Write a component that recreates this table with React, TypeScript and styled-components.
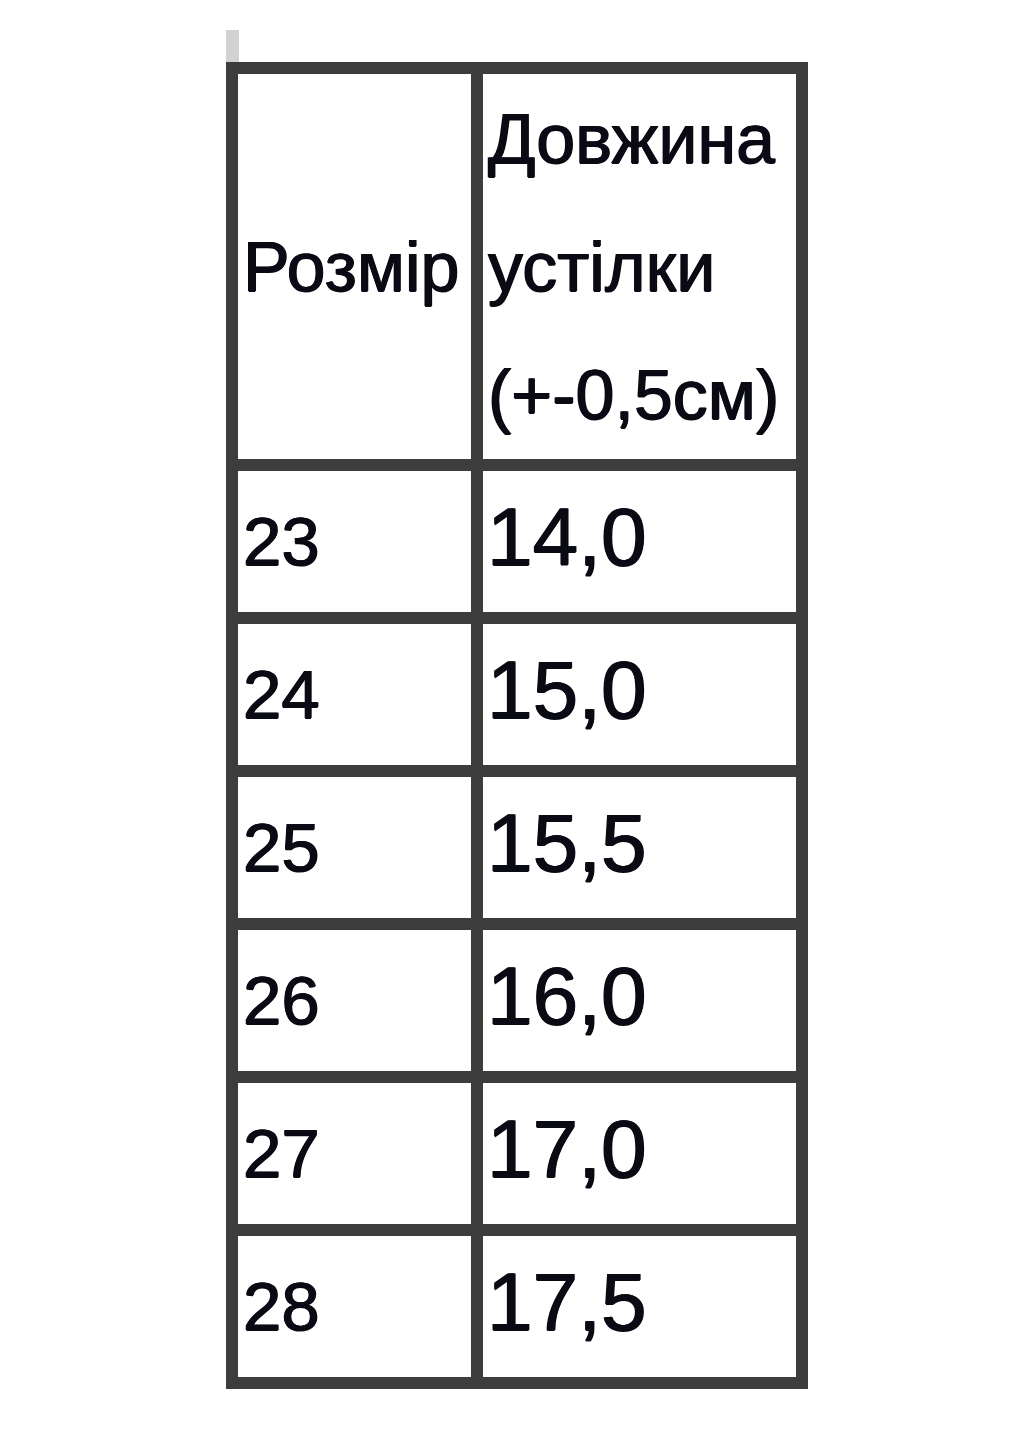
import React from 'react';
import styled, {createGlobalStyle} from 'styled-components';

const GlobalStyle = createGlobalStyle`
  html, body {
    margin: 0;
    padding: 0;
    background: #ffffff;
  }
  body {
    font-family: 'Liberation Sans', Arial, sans-serif;
    color: #0a0a14;
  }
`;

const Page = styled.div`
  display: flex;
  flex-direction: column;
  align-items: flex-start;
  padding-left: 226px;
  padding-top: 30px;
`;

const Notch = styled.div`
  width: 13px;
  height: 32px;
  background: #d2d2d2;
`;

const Table = styled.table`
  border-collapse: collapse;
  border: 12px solid #3d3d3d;
  table-layout: fixed;
`;

const heavy = `
  text-shadow: 0.7px 0 0 currentColor, -0.7px 0 0 currentColor, 0 0.5px 0 currentColor;
`;

const HeadCell = styled.td`
  height: 385px;
  padding: 0 0 0 5px;
  border: 12px solid #3d3d3d;
  font-size: 70px;
  line-height: 128px;
  vertical-align: middle;
  text-align: left;
  white-space: nowrap;
  ${heavy}
`;

const Cell = styled.td<{big?: boolean}>`
  height: ${({big}) => (big ? 131 : 141)}px;
  padding: 0 0 ${({big}) => (big ? 10 : 0)}px ${({big}) => (big ? 4 : 5)}px;
  border: 12px solid #3d3d3d;
  font-size: ${({big}) => (big ? 82 : 69)}px;
  line-height: ${({big}) => (big ? 131 : 141)}px;
  vertical-align: top;
  text-align: left;
  ${heavy}
`;

const rows: [string, string][] = [
  ['23', '14,0'],
  ['24', '15,0'],
  ['25', '15,5'],
  ['26', '16,0'],
  ['27', '17,0'],
  ['28', '17,5'],
];

export default function App() {
  return (
    <>
      <GlobalStyle />
      <Page>
        <Notch />
        <Table>
          <colgroup>
            <col style={{width: 245}} />
            <col style={{width: 325}} />
          </colgroup>
          <tbody>
            <tr>
              <HeadCell>Розмір</HeadCell>
              <HeadCell>
                Довжина
                <br />
                устілки
                <br />
                (+-0,5см)
              </HeadCell>
            </tr>
            {rows.map(([size, length]) => (
              <tr key={size}>
                <Cell>{size}</Cell>
                <Cell big>{length}</Cell>
              </tr>
            ))}
          </tbody>
        </Table>
      </Page>
    </>
  );
}
